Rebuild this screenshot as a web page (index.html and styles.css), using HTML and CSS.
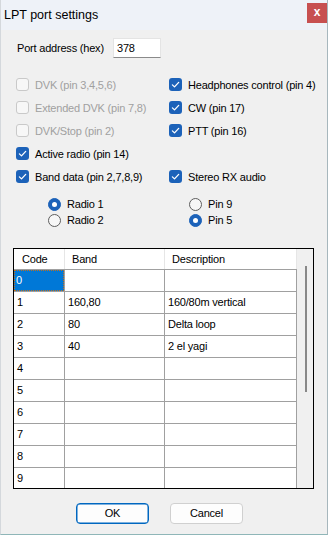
FILE: index.html
```html
<!DOCTYPE html>
<html>
<head>
<meta charset="utf-8">
<link rel="stylesheet" href="styles.css">
</head>
<body>
<div class="window">
  <div class="titlebar">
    <span class="title">LPT port settings</span>
    <span class="close">x</span>
  </div>
  <div class="content">
    <div class="port-row">
      <span class="label">Port address (hex)</span>
      <div class="input">378</div>
    </div>
    <div class="checks">
      <div class="chk disabled"><span class="box"></span><span>DVK (pin 3,4,5,6)</span></div>
      <div class="chk checked"><span class="box"><svg viewBox="0 0 13 13"><path d="M3.4 6.9 L5.5 8.9 L9.7 4.4"/></svg></span><span>Headphones control (pin 4)</span></div>
      <div class="chk disabled"><span class="box"></span><span>Extended DVK (pin 7,8)</span></div>
      <div class="chk checked"><span class="box"><svg viewBox="0 0 13 13"><path d="M3.4 6.9 L5.5 8.9 L9.7 4.4"/></svg></span><span>CW (pin 17)</span></div>
      <div class="chk disabled"><span class="box"></span><span>DVK/Stop (pin 2)</span></div>
      <div class="chk checked"><span class="box"><svg viewBox="0 0 13 13"><path d="M3.4 6.9 L5.5 8.9 L9.7 4.4"/></svg></span><span>PTT (pin 16)</span></div>
      <div class="chk checked"><span class="box"><svg viewBox="0 0 13 13"><path d="M3.4 6.9 L5.5 8.9 L9.7 4.4"/></svg></span><span>Active radio (pin 14)</span></div>
      <div class="chk empty"></div>
      <div class="chk checked"><span class="box"><svg viewBox="0 0 13 13"><path d="M3.4 6.9 L5.5 8.9 L9.7 4.4"/></svg></span><span>Band data (pin 2,7,8,9)</span></div>
      <div class="chk checked"><span class="box"><svg viewBox="0 0 13 13"><path d="M3.4 6.9 L5.5 8.9 L9.7 4.4"/></svg></span><span>Stereo RX audio</span></div>
    </div>
    <div class="radios">
      <div class="radio on"><span class="dot"></span><span>Radio 1</span></div>
      <div class="radio"><span class="dot"></span><span>Pin 9</span></div>
      <div class="radio"><span class="dot"></span><span>Radio 2</span></div>
      <div class="radio on"><span class="dot"></span><span>Pin 5</span></div>
    </div>
    <div class="grid">
      <div class="cols">
        <div class="table">
          <div class="row head"><div class="c c1">Code</div><div class="c c2">Band</div><div class="c c3">Description</div></div>
          <div class="row"><div class="selcell"><div class="focusbox">0</div></div><div class="c c2"></div><div class="c c3"></div></div>
          <div class="row"><div class="c c1">1</div><div class="c c2">160,80</div><div class="c c3">160/80m vertical</div></div>
          <div class="row"><div class="c c1">2</div><div class="c c2">80</div><div class="c c3">Delta loop</div></div>
          <div class="row"><div class="c c1">3</div><div class="c c2">40</div><div class="c c3">2 el yagi</div></div>
          <div class="row"><div class="c c1">4</div><div class="c c2"></div><div class="c c3"></div></div>
          <div class="row"><div class="c c1">5</div><div class="c c2"></div><div class="c c3"></div></div>
          <div class="row"><div class="c c1">6</div><div class="c c2"></div><div class="c c3"></div></div>
          <div class="row"><div class="c c1">7</div><div class="c c2"></div><div class="c c3"></div></div>
          <div class="row"><div class="c c1">8</div><div class="c c2"></div><div class="c c3"></div></div>
          <div class="row"><div class="c c1">9</div><div class="c c2"></div><div class="c c3"></div></div>
        </div>
        <div class="scrollbar"><div class="thumb"></div></div>
      </div>
    </div>
    <div class="buttons">
      <div class="btn default">OK</div>
      <div class="btn">Cancel</div>
    </div>
  </div>
</div>
</body>
</html>
```

FILE: styles.css
```css
* { box-sizing: border-box; }
html, body { margin: 0; padding: 0; }
body {
  width: 328px;
  height: 535px;
  overflow: hidden;
  background: #f0f0f0;
  font-family: "Liberation Sans", Arial, sans-serif;
  font-size: 11px;
  letter-spacing: -0.2px;
  color: #000;
}
.window {
  width: 328px;
  height: 535px;
  background: #f0f0f0;
  border-right: 1px solid #a7b7bd;
  border-bottom: 1px solid #8fb6b8;
  border-left: 1px solid #d4d8dc;
  display: flex;
  flex-direction: column;
}
.titlebar {
  height: 30px;
  background: #eef2f8;
  display: flex;
  align-items: flex-start;
  justify-content: space-between;
  flex: none;
}
.title {
  font-size: 12.5px;
  letter-spacing: 0;
  margin: 7px 0 0 3px;
  line-height: 16px;
}
.close {
  width: 20px;
  height: 20px;
  margin-top: 3px;
  background: #c75050;
  color: #fff;
  font-weight: bold;
  font-size: 12px;
  line-height: 18px;
  text-align: center;
}
.content {
  display: flex;
  flex-direction: column;
}
.port-row {
  display: flex;
  align-items: center;
  margin-top: 8px;
  height: 20px;
  padding-left: 16px;
  white-space: nowrap;
}
.label { width: 96px; }
.input {
  width: 48px;
  height: 20px;
  background: #fff;
  border: 1px solid #e4e4e4;
  border-bottom: 1px solid #8a8a8a;
  padding: 2px 0 0 3px;
  line-height: 15px;
}
.checks {
  margin-top: 15px;
  padding-left: 15px;
  display: grid;
  grid-template-columns: 153px 1fr;
  grid-auto-rows: 23px;
  white-space: nowrap;
}
.chk {
  display: flex;
  align-items: center;
  gap: 6px;
}
.box {
  width: 13px;
  height: 13px;
  border-radius: 3px;
  flex: none;
  display: flex;
}
.box svg { width: 13px; height: 13px; }
.box path { fill: none; stroke: #fff; stroke-width: 1.3; stroke-linecap: round; stroke-linejoin: round; }
.checked .box { background: #1c62b9; }
.disabled .box { background: #f7f7f7; border: 1px solid #c9c9c9; }
.disabled { color: #a0a0a0; }
.radios {
  margin-top: 8px;
  padding-left: 47px;
  display: grid;
  grid-template-columns: 141px 1fr;
  grid-auto-rows: 16px;
}
.radio {
  display: flex;
  align-items: center;
  gap: 6px;
}
.dot {
  width: 13px;
  height: 13px;
  border-radius: 50%;
  border: 1px solid #5e5e5e;
  background: #f7f7f7;
  flex: none;
  display: flex;
  align-items: center;
  justify-content: center;
}
.radio.on .dot { background: #1c62b9; border-color: #1c62b9; }
.radio.on .dot::after {
  content: "";
  width: 5px;
  height: 5px;
  border-radius: 50%;
  background: #fff;
}
.grid {
  margin: 20px 0 0 12px;
  width: 301px;
  height: 241px;
  border: 1px solid #000;
  background: #fff;
  overflow: hidden;
}
.cols { display: flex; height: 100%; }
.table { width: 283px; flex: none; }
.row { display: flex; height: 22px; border-bottom: 1px solid #a0a0a0; }
.c {
  height: 21px;
  line-height: 21px;
  border-right: 1px solid #a0a0a0;
  padding-left: 3px;
  white-space: nowrap;
}
.c1 { width: 51px; }
.c2 { width: 100px; }
.c3 { width: 132px; }
.head { height: 21px; }
.head .c { height: 20px; line-height: 20px; border-right-color: #e6e6e6; }
.head .c1 { padding-left: 8px; }
.head .c2 { padding-left: 7px; }
.head .c3 { padding-left: 7px; }
.selcell {
  width: 51px;
  height: 21px;
  flex: none;
  border-right: 1px solid #a0a0a0;
  background-color: #0078d7;
}
.focusbox {
  height: 21px;
  width: 50px;
  background-color: #0078d7;
  color: #ffffff;
  padding-left: 2px;
  line-height: 21px;
  outline: 1px dotted #c07020;
  outline-offset: -1px;
}
.scrollbar {
  flex: 1;
  background: #f0f0f0;
  display: flex;
  justify-content: center;
  padding-top: 17px;
}
.thumb {
  width: 2px;
  height: 126px;
  background: #888;
  margin-left: 1px;
}
.buttons {
  display: flex;
  gap: 21px;
  padding-left: 75px;
  margin-top: 14px;
}
.btn {
  width: 73px;
  height: 21px;
  background: #fdfdfd;
  border: 1px solid #d0d0d0;
  border-radius: 4px;
  text-align: center;
  line-height: 19px;
}
.btn.default { border: 1px solid #0067c0; box-shadow: inset 0 0 0 0.5px #0067c0; }
```
